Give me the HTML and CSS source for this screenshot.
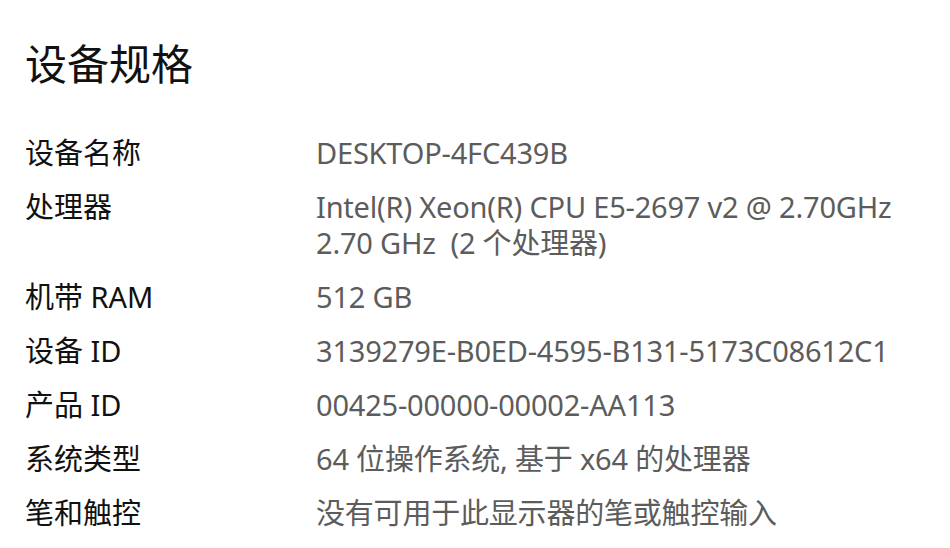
FILE: index.html
```html
<!DOCTYPE html>
<html lang="zh-CN">
<head>
    <meta charset="UTF-8" />
    <title>设备规格</title>
    <link rel="stylesheet" href="styles.css">
</head>
<body>
    <h1>设备规格</h1>

    <dl class="specs">
        <dt>设备名称</dt>
        <dd>DESKTOP-4FC439B</dd>

        <dt>处理器</dt>
        <dd>Intel(R) Xeon(R) CPU E5-2697 v2 @ 2.70GHz<br />2.70 GHz&nbsp; (2 个处理器)</dd>

        <dt>机带 RAM</dt>
        <dd>512 GB</dd>

        <dt>设备 ID</dt>
        <dd>3139279E-B0ED-4595-B131-5173C08612C1</dd>

        <dt>产品 ID</dt>
        <dd>00425-00000-00002-AA113</dd>

        <dt>系统类型</dt>
        <dd>64 位操作系统, 基于 x64 的处理器</dd>

        <dt>笔和触控</dt>
        <dd>没有可用于此显示器的笔或触控输入</dd>
    </dl>
</body>
</html>
```

FILE: styles.css
```css
body {
    font-family: "Noto Sans", "Noto Sans CJK SC", sans-serif;
    margin: 0;
    padding: 36px 25px 0;
    background-color: #fff;
    color: #111;
}
h1 {
    margin: 0 0 43px;
    font-size: 42px;
    font-weight: normal;
    line-height: 56px;
    color: #111;
}
.specs {
    display: grid;
    grid-template-columns: 291px 1fr;
    row-gap: 18px;
    margin: 0;
    font-size: 29px;
    line-height: 36px;
    white-space: nowrap;
}
.specs dt {
    color: #111;
}
.specs dd {
    margin: 0;
    color: #5c5c5c;
    letter-spacing: -0.2px;
}
```
